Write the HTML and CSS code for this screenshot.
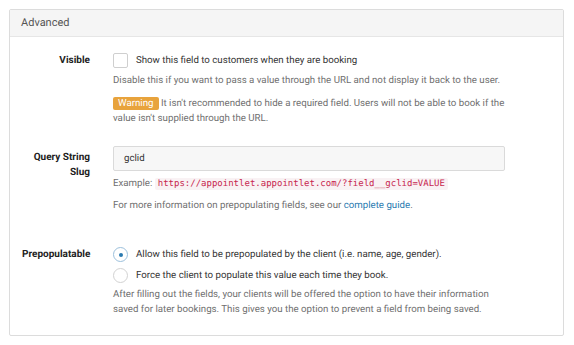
FILE: index.html
```html
<!DOCTYPE html>
<html>
<head>
<meta charset="utf-8">
<link rel="stylesheet" href="styles.css">
</head>
<body>
<div class="panel">
  <div class="panel-head">Advanced</div>
  <div class="panel-body">
    <div class="row row-visible">
      <div class="label">Visible</div>
      <div class="control">
        <label class="check-line"><span class="checkbox"></span><span>Show this field to customers when they are booking</span></label>
        <p class="help first">Disable this if you want to pass a value through the URL and not display it back to the user.</p>
        <p class="help warn"><span class="badge">Warning</span> It isn't recommended to hide a required field. Users will not be able to book if the value isn't supplied through the URL.</p>
      </div>
    </div>
    <div class="row row-slug">
      <div class="label label-slug">Query String Slug</div>
      <div class="control">
        <div class="input">gclid</div>
        <p class="help example">Example: <code>https://appointlet.appointlet.com/?field__gclid=VALUE</code></p>
        <p class="help more">For more information on prepopulating fields, see our <a href="#">complete guide</a>.</p>
      </div>
    </div>
    <div class="row row-prepop">
      <div class="label">Prepopulatable</div>
      <div class="control">
        <label class="radio-line"><span class="radio checked"></span><span>Allow this field to be prepopulated by the client (i.e. name, age, gender).</span></label>
        <label class="radio-line second"><span class="radio"></span><span>Force the client to populate this value each time they book.</span></label>
        <p class="help after">After filling out the fields, your clients will be offered the option to have their information saved for later bookings. This gives you the option to prevent a field from being saved.</p>
      </div>
    </div>
  </div>
</div>
</body>
</html>
```
FILE: styles.css
```css
html, body {
  margin: 0;
  background: #fff;
}
body {
  padding: 9px 10px 0 9px;
  font-family: Roboto, "Liberation Sans", sans-serif;
  font-size: 9.7px;
  color: #333;
  text-rendering: geometricPrecision;
}
.panel {
  border: 1px solid #dcdcdc;
  border-radius: 2px;
}
.panel-head {
  background: #f5f5f5;
  border-bottom: 1px solid #e6e6e6;
  height: 26px;
  line-height: 26px;
  padding-left: 11px;
  font-size: 11px;
  color: #555;
}
.panel-body {
  padding: 16px 0 18px 12px;
}
.row {
  display: grid;
  grid-template-columns: 68px 1fr;
  column-gap: 23px;
}
.row-slug { margin-top: 20px; }
.row-prepop { margin-top: 34px; }
.label {
  text-align: right;
  font-weight: 700;
  color: #222;
  line-height: 15px;
  font-size: 10px;
}
.label-slug { padding-top: 4px; }
.control {
  line-height: 15px;
  max-width: 394px;
}
.check-line, .radio-line {
  display: flex;
  align-items: center;
  gap: 8px;
  height: 15px;
  color: #333;
}
.checkbox {
  width: 13px;
  height: 13px;
  border: 1px solid #cfcfcf;
  border-radius: 2px;
  background: #fff;
  flex: none;
}
.radio {
  width: 13px;
  height: 13px;
  border: 1px solid #d2d2d2;
  border-radius: 50%;
  background: #fff;
  flex: none;
  position: relative;
}
.radio.checked { border-color: #9cc0dc; }
.radio.checked::after {
  content: "";
  position: absolute;
  left: 4.5px;
  top: 4.5px;
  width: 4px;
  height: 4px;
  border-radius: 50%;
  background: #2a7ab0;
}
.help {
  margin: 0;
  color: #6f6f6f;
  line-height: 15px;
  font-size: 9.7px;
}
.help.first { margin-top: 5px; }
.help.warn { margin-top: 8px; }
.badge {
  display: inline-block;
  background: #e8a33c;
  color: #fff;
  border-radius: 2px;
  padding: 0 5px;
  line-height: 13px;
  font-size: 9.7px;
}
.input {
  width: 380px;
  height: 23px;
  line-height: 23px;
  border: 1px solid #dadada;
  border-radius: 2px;
  background: #f7f7f7;
  padding-left: 10px;
  color: #333;
  font-size: 9.7px;
}
.help.example { margin-top: 5px; }
code {
  font-family: "DejaVu Sans Mono", "Liberation Mono", monospace;
  font-size: 9px;
  color: #c7254e;
  background: #f9f2f4;
  padding: 1px 3px;
  border-radius: 2px;
}
.help.more { margin-top: 6px; }
a { color: #2a7ab0; text-decoration: none; }
.radio-line.second { margin-top: 6px; }
.help.after { margin-top: 4px; }
```
